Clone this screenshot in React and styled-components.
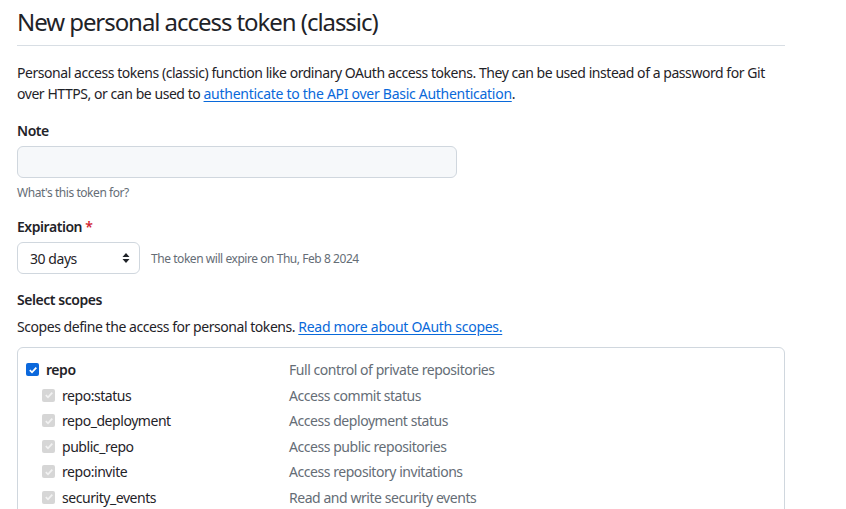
import styled, { createGlobalStyle } from "styled-components";

const scopes = [
  { name: "repo", desc: "Full control of private repositories", parent: true },
  { name: "repo:status", desc: "Access commit status" },
  { name: "repo_deployment", desc: "Access deployment status" },
  { name: "public_repo", desc: "Access public repositories" },
  { name: "repo:invite", desc: "Access repository invitations" },
  { name: "security_events", desc: "Read and write security events" },
];

const Check = () => (
  <svg width="10" height="10" viewBox="0 0 10 10">
    <path d="M1.8 5.2 L4 7.3 L8.3 2.6" fill="none" stroke="#fff" strokeWidth="1.8" />
  </svg>
);

const App = () => {
  return (
    <>
      <GlobalStyle />
      <Page>
        <Title>New personal access token (classic)</Title>
        <Lead>
          Personal access tokens (classic) function like ordinary OAuth access tokens. They can be used instead of a
          password for Git over HTTPS, or can be used to{" "}
          <Link href="#">authenticate to the API over Basic Authentication</Link>.
        </Lead>

        <Group>
          <Label>Note</Label>
          <Input />
          <Hint>What's this token for?</Hint>
        </Group>

        <Group>
          <Label>
            Expiration <Required>*</Required>
          </Label>
          <SelectRow>
            <Select>
              <span>30 days</span>
              <svg width="8" height="12" viewBox="0 0 8 12">
                <path d="M4 1 L7.5 5 H0.5 Z M4 11 L0.5 7 H7.5 Z" fill="#1f2328" />
              </svg>
            </Select>
            <SelectNote>The token will expire on Thu, Feb 8 2024</SelectNote>
          </SelectRow>
        </Group>

        <Label>Select scopes</Label>
        <ScopeIntro>
          Scopes define the access for personal tokens. <Link href="#">Read more about OAuth scopes.</Link>
        </ScopeIntro>

        <ScopeBox>
          {scopes.map((s) => (
            <ScopeRow key={s.name}>
              <ScopeName $parent={s.parent}>
                <Box $parent={s.parent}>
                  <Check />
                </Box>
                {s.name}
              </ScopeName>
              <ScopeDesc>{s.desc}</ScopeDesc>
            </ScopeRow>
          ))}
        </ScopeBox>
      </Page>
    </>
  );
};

export default App;

const GlobalStyle = createGlobalStyle`
  body {
    margin: 0;
    background: #fff;
    color: #1f2328;
    font-family: "Noto Sans", "Liberation Sans", sans-serif;
    font-size: 14px;
    letter-spacing: -0.032em;
  }
`;

const Page = styled.div`
  width: 768px;
  padding: 0 17px;
  overflow: hidden;
  height: 509px;
`;

const Title = styled.h1`
  margin: 0;
  padding: 5px 0 6px;
  font-size: 24px;
  font-weight: 400;
  line-height: 34px;
  letter-spacing: -0.044em;
  border-bottom: 1px solid #d8dee4;
`;

const Lead = styled.p`
  margin: 16px 0 16px;
  line-height: 21px;
`;

const Link = styled.a`
  color: #0969da;
  text-decoration: underline;
  text-underline-offset: 2px;
  letter-spacing: -0.02em;
`;

const Group = styled.div`
  margin: 15px 0 15px;
`;

const Label = styled.div`
  font-weight: 600;
  line-height: 21px;
  margin-bottom: 5px;
`;

const Required = styled.span`
  color: #d1242f;
`;

const Input = styled.div`
  width: 438px;
  height: 30px;
  background: #f6f8fa;
  border: 1px solid #d0d7de;
  border-radius: 6px;
`;

const Hint = styled.div`
  font-size: 12px;
  color: #656d76;
  margin-top: 7px;
  line-height: 16px;
`;

const SelectRow = styled.div`
  display: flex;
  align-items: center;
  gap: 11px;
`;

const Select = styled.div`
  width: 121px;
  height: 30px;
  border: 1px solid #d0d7de;
  border-radius: 6px;
  display: flex;
  align-items: center;
  justify-content: space-between;
  & > span {
    padding-left: 12px;
  }
  & > svg {
    margin-right: 9px;
  }
`;

const SelectNote = styled.span`
  font-size: 12px;
  color: #656d76;
`;

const ScopeIntro = styled.p`
  margin: 6px 0 0;
  line-height: 21px;
`;

const ScopeBox = styled.div`
  margin-top: 10px;
  border: 1px solid #d0d7de;
  border-radius: 6px;
  padding: 9px 8px;
`;

const ScopeRow = styled.div`
  display: grid;
  grid-template-columns: 263px 1fr;
  height: 25.5px;
  align-items: center;
`;

const ScopeName = styled.div`
  display: flex;
  align-items: center;
  gap: 7px;
  padding-left: ${({ $parent }) => ($parent ? "0" : "16px")};
  font-weight: ${({ $parent }) => ($parent ? 600 : 400)};
`;

const Box = styled.span`
  width: 13px;
  height: 13px;
  border-radius: 2px;
  display: inline-flex;
  align-items: center;
  justify-content: center;
  background: ${({ $parent }) => ($parent ? "#0b68dc" : "#d6d6d6")};
  svg path {
    stroke: ${({ $parent }) => ($parent ? "#fff" : "#f2f2f2")};
  }
`;

const ScopeDesc = styled.div`
  color: #656d76;
`;
